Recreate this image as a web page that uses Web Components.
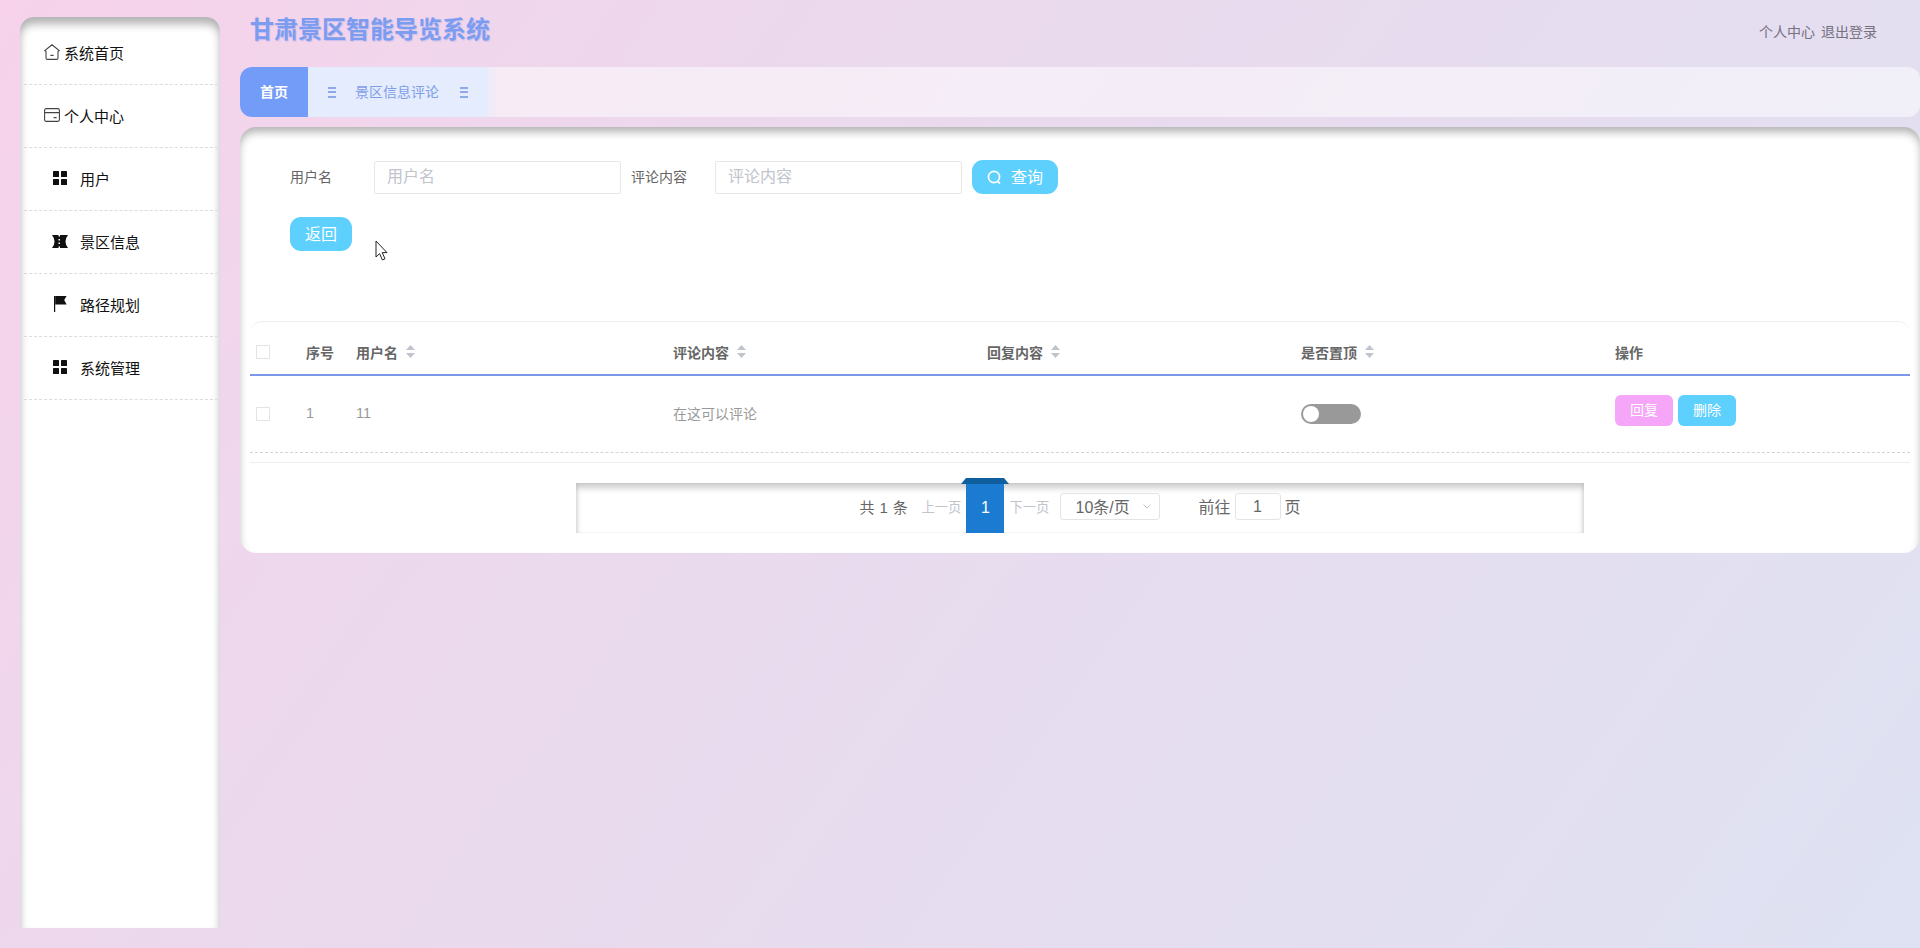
<!DOCTYPE html>
<html lang="zh">
<head>
<meta charset="utf-8">
<title>甘肃景区智能导览系统</title>
<style>
    html, body { margin: 0; height: 100%; }
    body {
        font-family: "Liberation Sans", "Noto Sans CJK SC", sans-serif;
        background: linear-gradient(125deg, #f7d2ea 0%, #edd8ed 28%, #dee2f2 100%);
        overflow: hidden;
    }
</style>
</head>
<body>
<app-shell>
    <side-menu slot="side">
        <menu-item icon="home" top>系统首页</menu-item>
        <menu-item icon="card" top>个人中心</menu-item>
        <menu-item icon="grid">用户</menu-item>
        <menu-item icon="ticket">景区信息</menu-item>
        <menu-item icon="flag">路径规划</menu-item>
        <menu-item icon="grid">系统管理</menu-item>
    </side-menu>
    <top-bar></top-bar>
    <tab-strip></tab-strip>
    <main-card>
        <search-form></search-form>
        <data-table></data-table>
        <page-bar></page-bar>
    </main-card>
</app-shell>

<script>
const FONT = '"Liberation Sans", "Noto Sans CJK SC", sans-serif';

const ICONS = {
    home: '<svg width="16" height="16" viewBox="0 0 16 16" fill="none" stroke="#444" stroke-width="1.1"><path d="M8 .8 15.2 6.6 14 7.4V14a1.4 1.4 0 0 1-1.4 1.4H3.4A1.4 1.4 0 0 1 2 14V7.4L.8 6.6Z"/><path d="M6.4 11.4h3.2" stroke-width="1.2"/></svg>',
    card: '<svg width="16" height="14" viewBox="0 0 16 14" fill="none" stroke="#444" stroke-width="1.1"><rect x=".6" y=".6" width="14.8" height="12.8" rx="1.6"/><path d="M.6 4.6h14.8M9.6 9.6h3"/></svg>',
    grid: '<svg width="14" height="14" viewBox="0 0 14 14" fill="#111"><rect width="6" height="6" rx=".6"/><rect x="8" width="6" height="6" rx=".6"/><rect y="8" width="6" height="6" rx=".6"/><rect x="8" y="8" width="6" height="6" rx=".6"/></svg>',
    ticket: '<svg width="16" height="13" viewBox="0 0 16 13" fill="#111"><path d="M0 0h6.5v1.5h1.5V0H16Q13.5 3 13.5 6.5 13.5 10 16 13H8v-1.5H6.5V13H0Q2.5 10 2.5 6.5 2.5 3 0 0Z"/><path d="M6.5 4H8v1.5H6.5ZM6.5 7.5H8V9H6.5Z" fill="#fff"/></svg>',
    flag: '<svg width="13" height="16" viewBox="0 0 13 16" fill="#111"><rect x="0" y="0" width="1.2" height="16"/><path d="M1.2 0H12.6L10.2 4 12.6 8.6H1.2Z"/></svg>'
};

class AppShell extends HTMLElement {
    constructor() {
        super();
        this.attachShadow({ mode: 'open' });
        this.shadowRoot.innerHTML = `
            <style>
                :host {
                    display: grid;
                    grid-template-columns: 200px 1fr;
                    column-gap: 20px;
                    padding: 17px 0 20px 20px;
                    height: 948px;
                    box-sizing: border-box;
                    position: relative;
                }
                .right { min-width: 0; margin-top: -17px; }
                svg { position: absolute; left: 375px; top: 240px; }
            </style>
            <slot name="side"></slot>
            <div class="right"><slot></slot></div>
            <svg width="14" height="21" viewBox="0 0 14 21"><path d="M1 1V17L4.6 13.6 7.4 20 10 18.8 7.2 12.6H12Z" fill="#fff" stroke="#222" stroke-width="1"/></svg>
        `;
    }
}

class SideMenu extends HTMLElement {
    constructor() {
        super();
        this.attachShadow({ mode: 'open' });
        this.shadowRoot.innerHTML = `
            <style>
                :host {
                    display: block;
                    padding-top: 5px;
                    background: #fff;
                    border-radius: 14px 14px 0 0;
                    box-shadow: inset 0 7px 9px rgba(0, 0, 0, .3);
                }
            </style>
            <slot></slot>
        `;
    }
}

class MenuItem extends HTMLElement {
    constructor() {
        super();
        this.attachShadow({ mode: 'open' });
    }

    connectedCallback() {
        const top = this.hasAttribute('top');
        this.shadowRoot.innerHTML = `
            <style>
                :host {
                    display: flex;
                    align-items: center;
                    height: 60px;
                    padding: 0 0 2px ${top ? 20 : 28}px;
                    gap: ${top ? 4 : 12}px;
                    font-size: 15px;
                    color: #111;
                    border-bottom: 1px dashed #dcdcdc;
                    margin: 0 2px 0 4px;
                }
                .ico { display: flex; width: 16px; justify-content: center; }
            </style>
            <span class="ico">${ICONS[this.getAttribute('icon')]}</span>
            <slot></slot>
        `;
    }
}

class TopBar extends HTMLElement {
    constructor() {
        super();
        this.attachShadow({ mode: 'open' });
        this.shadowRoot.innerHTML = `
            <style>
                :host {
                    display: flex;
                    justify-content: space-between;
                    align-items: center;
                    height: 67px;
                    box-sizing: border-box;
                    padding: 0 43px 10px 10px;
                }
                h1 {
                    margin: 0 0 2px;
                    font-size: 24px;
                    font-weight: 700;
                    color: #7c9cf0;
                    text-shadow: 1px 1px 1px rgba(120, 150, 240, .35);
                }
                nav { display: flex; gap: 6px; font-size: 14px; color: #76707f; margin-top: 4px; }
            </style>
            <h1>甘肃景区智能导览系统</h1>
            <nav><span>个人中心</span><span>退出登录</span></nav>
        `;
    }
}

class TabStrip extends HTMLElement {
    constructor() {
        super();
        this.attachShadow({ mode: 'open' });
        this.shadowRoot.innerHTML = `
            <style>
                :host {
                    display: flex;
                    height: 50px;
                    border-radius: 12px;
                    overflow: hidden;
                    background: rgba(255, 255, 255, .5);
                    font-size: 14px;
                    line-height: 50px;
                }
                .home {
                    width: 68px;
                    text-align: center;
                    background: #739cf8;
                    color: #fff;
                    font-weight: 700;
                }
                .tab {
                    display: flex;
                    width: 180px;
                    box-sizing: border-box;
                    padding-left: 20px;
                    gap: 19px;
                    background: #e4ecfd;
                    color: #7f9ee8;
                    box-shadow: 8px 0 0 rgba(228, 236, 253, .35);
                }
                .bars { display: flex; flex-direction: column; gap: 2.5px; justify-content: center; }
                .bars:last-child { margin-left: 2px; }
                .bars i { display: block; width: 8px; height: 2px; background: #8fa8e8; }
            </style>
            <div class="home">首页</div>
            <div class="tab">
                <span class="bars"><i></i><i></i><i></i></span>
                <span>景区信息评论</span>
                <span class="bars"><i></i><i></i><i></i></span>
            </div>
        `;
    }
}

class MainCard extends HTMLElement {
    constructor() {
        super();
        this.attachShadow({ mode: 'open' });
        this.shadowRoot.innerHTML = `
            <style>
                :host {
                    display: block;
                    margin-top: 10px;
                    height: 426px;
                    box-sizing: border-box;
                    padding: 33px 10px 0;
                    background: #fff;
                    border-radius: 16px;
                    box-shadow: inset 0 6px 8px -1px rgba(0, 0, 0, .3);
                }
            </style>
            <slot></slot>
        `;
    }
}

class SearchForm extends HTMLElement {
    constructor() {
        super();
        this.attachShadow({ mode: 'open' });
        this.shadowRoot.innerHTML = `
            <style>
                :host { display: block; padding-left: 40px; height: 161px; font-size: 14px; color: #666; }
                .row { display: flex; align-items: center; height: 34px; margin-bottom: 23px; }
                label { width: 84px; margin-top: -3px; }
                label + input { margin-right: 10px; }
                input {
                    width: 247px;
                    height: 33px;
                    box-sizing: border-box;
                    padding: 0 12px;
                    border: 1px solid #e8e8e8;
                    border-radius: 2px;
                    font: 16px ${FONT};
                    outline: none;
                }
                input::placeholder { color: #c0c4cc; }
                button {
                    display: flex;
                    align-items: center;
                    justify-content: center;
                    gap: 9px;
                    height: 34px;
                    padding: 0 0 3px;
                    border: 0;
                    border-radius: 11px;
                    background: #5dd0fe;
                    color: #fff;
                    font: 16px ${FONT};
                }
                button svg { margin-top: 3px; }
                .query { width: 86px; }
                .back { width: 62px; }
            </style>
            <div class="row">
                <label>用户名</label><input placeholder="用户名">
                <label>评论内容</label><input placeholder="评论内容">
                <button class="query">
                    <svg width="15" height="15" viewBox="0 0 15 15" fill="none" stroke="#fff" stroke-width="1.6"><circle cx="7" cy="7" r="5.6"/><path d="M10.6 11.2 13 13.6"/></svg>
                    查询
                </button>
            </div>
            <div class="row"><button class="back">返回</button></div>
        `;
    }
}

class DataTable extends HTMLElement {
    constructor() {
        super();
        this.attachShadow({ mode: 'open' });
        const sort = '<svg width="9" height="13" viewBox="0 0 9 13" fill="#c0c4cc"><path d="M4.5 0 9 5H0ZM0 8h9l-4.5 5Z"/></svg>';
        this.shadowRoot.innerHTML = `
            <style>
                :host {
                    display: block;
                    border-top: 1px solid #eeeeee;
                    border-top-left-radius: 12px;
                    border-top-right-radius: 12px;
                    font-size: 14px;
                }
                .row {
                    display: grid;
                    grid-template-columns: 56px 50px 317px 314px 314px 314px 1fr;
                    align-items: center;
                }
                .head { height: 54px; padding-top: 8px; box-sizing: border-box; color: #666; font-weight: 700; border-bottom: 2px solid #7b97e8; }
                .head > span:not(.box) { margin-top: -1px; }
                .body { height: 76px; color: #999; border-bottom: 1px dashed #d4d4d4; }
                .body .txt { margin-top: -2px; font-size: 14.5px; }
                .box { display: block; width: 14px; height: 14px; margin-left: 6px; border: 1px solid #e4e4e4; box-sizing: border-box; }
                .th { display: flex; align-items: center; gap: 8px; }
                .switch {
                    display: block;
                    width: 60px;
                    height: 20px;
                    border-radius: 10px;
                    background: #999;
                    position: relative;
                }
                .switch::before {
                    content: "";
                    position: absolute;
                    left: 2px;
                    top: 2px;
                    width: 16px;
                    height: 16px;
                    border-radius: 50%;
                    background: #fff;
                }
                .ops { display: flex; gap: 5px; margin-top: -7px; }
                .ops span {
                    width: 58px;
                    height: 31px;
                    line-height: 31px;
                    border-radius: 6px;
                    text-align: center;
                    color: #fff;
                    font-size: 14px;
                }
                .ops .a { background: #f5a6f8; }
                .ops .b { background: #5dd0fe; }
                .foot { height: 9px; border-bottom: 1px solid #eeeeee; }
            </style>
            <div class="row head">
                <span class="box"></span>
                <span>序号</span>
                <span class="th">用户名 ${sort}</span>
                <span class="th">评论内容 ${sort}</span>
                <span class="th">回复内容 ${sort}</span>
                <span class="th">是否置顶 ${sort}</span>
                <span>操作</span>
            </div>
            <div class="row body">
                <span class="box"></span>
                <span class="txt">1</span>
                <span class="txt">11</span>
                <span class="txt" style="font-size:14px">在这可以评论</span>
                <span></span>
                <span class="switch"></span>
                <span class="ops"><span class="a">回复</span><span class="b">删除</span></span>
            </div>
            <div class="foot"></div>
        `;
    }
}

class PageBar extends HTMLElement {
    constructor() {
        super();
        this.attachShadow({ mode: 'open' });
        this.shadowRoot.innerHTML = `
            <style>
                :host {
                    display: flex;
                    justify-content: center;
                    align-items: center;
                    width: 1008px;
                    height: 50px;
                    margin: 20px 0 0 326px;
                    padding: 0 0 4px;
                    box-sizing: border-box;
                    font-size: 16px;
                    color: #666;
                    box-shadow: inset 0 5px 6px rgba(0, 0, 0, .2), inset 2px 0 3px rgba(0, 0, 0, .05), inset -2px 0 3px rgba(0, 0, 0, .05);
                    position: relative;
                }
                .total { width: 48px; font-size: 15px; white-space: nowrap; margin-right: 14px; letter-spacing: .4px; }
                .nav { width: 40px; font-size: 13.3px; color: #c0c4cc; white-space: nowrap; }
                .cur {
                    align-self: flex-start;
                    width: 38px;
                    height: 55px;
                    margin: -5px 5px 0;
                    padding-top: 5px;
                    box-sizing: border-box;
                    background: #1a7bd0;
                    color: #fff;
                    text-align: center;
                    line-height: 50px;
                    font-size: 16px;
                    position: relative;
                }
                .cur::before {
                    content: "";
                    position: absolute;
                    left: -5px;
                    top: 0;
                    width: 38px;
                    height: 0;
                    border: solid transparent;
                    border-width: 0 5px 6px;
                    border-bottom-color: #0f5f9f;
                }
                .sel {
                    display: flex;
                    align-items: center;
                    justify-content: space-between;
                    width: 100px;
                    height: 27px;
                    margin: 0 38px 0 11px;
                    padding: 0 8px 0 14px;
                    box-sizing: border-box;
                    border: 1px solid #e4e4e4;
                    border-radius: 3px;
                    white-space: nowrap;
                }
                .jump { width: 46px; height: 27px; margin: 0 4px; line-height: 25px; text-align: center; box-sizing: border-box; border: 1px solid #e4e4e4; border-radius: 3px; }
                svg { flex: none; }
            </style>
            <span class="total">共 1 条</span>
            <span class="nav">上一页</span>
            <span class="cur">1</span>
            <span class="nav">下一页</span>
            <span class="sel">10条/页 <svg width="8" height="5" viewBox="0 0 8 5" fill="none" stroke="#c0c4cc"><path d="M.5.5 4 4 7.5.5"/></svg></span>
            <span>前往</span>
            <span class="jump">1</span>
            <span>页</span>
        `;
    }
}

customElements.define('app-shell', AppShell);
customElements.define('side-menu', SideMenu);
customElements.define('menu-item', MenuItem);
customElements.define('top-bar', TopBar);
customElements.define('tab-strip', TabStrip);
customElements.define('main-card', MainCard);
customElements.define('search-form', SearchForm);
customElements.define('data-table', DataTable);
customElements.define('page-bar', PageBar);
</script>
</body>
</html>
